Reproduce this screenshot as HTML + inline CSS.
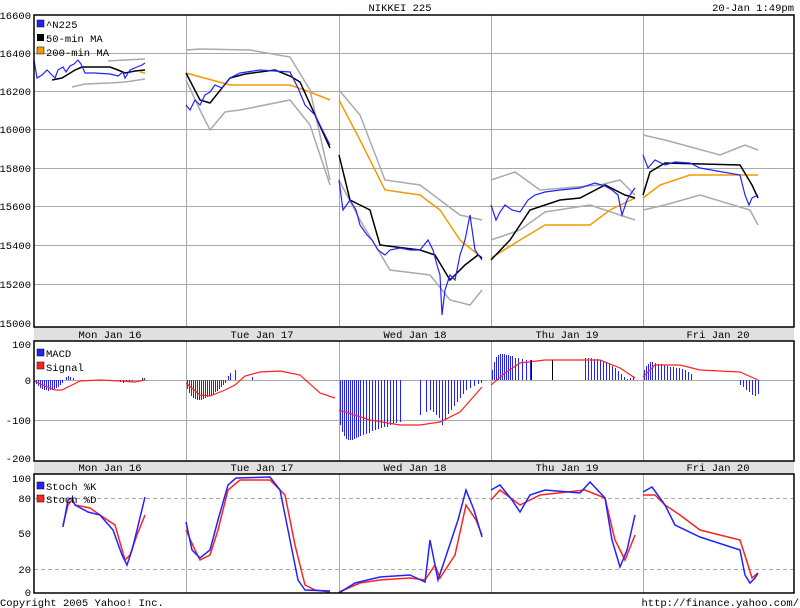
<!DOCTYPE html>
<html><head><meta charset="utf-8"><style>
html,body{margin:0;padding:0;background:#fff;}
svg{display:block;font-family:"Liberation Mono","DejaVu Sans Mono",monospace;font-size:10.5px;}
</style></head><body>
<svg width="800" height="608" viewBox="0 0 800 608" xmlns="http://www.w3.org/2000/svg">
<rect width="800" height="608" fill="#fff"/>
<text x="400" y="11" text-anchor="middle">NIKKEI 225</text>
<text x="794" y="11" text-anchor="end">20-Jan 1:49pm</text>
<g stroke="#aaa" stroke-width="1" fill="none">
<path d="M34 53.5H794M34 91.5H794M34 129.5H794M34 168.5H794M34 206.5H794M34 245.5H794M34 284.5H794"/>
<path d="M186.5 15V327M339.5 15V327M491.5 15V327M643.5 15V327"/>
<path d="M34 380.5H794M34 420.5H794M186.5 341V461M339.5 341V461M491.5 341V461M643.5 341V461"/>
<path d="M186.5 474V593M339.5 474V593M491.5 474V593M643.5 474V593"/>
</g>
<g stroke="#aaa" stroke-dasharray="4,3" fill="none"><path d="M34 498.5H794M34 569.5H794"/></g>
<rect x="34" y="327" width="760" height="14" fill="#e0e0e0"/>
<rect x="34" y="461" width="760" height="13" fill="#e0e0e0"/>
<g text-anchor="middle">
<text x="110" y="338">Mon Jan 16</text><text x="262" y="338">Tue Jan 17</text><text x="415" y="338">Wed Jan 18</text><text x="567" y="338">Thu Jan 19</text><text x="718" y="338">Fri Jan 20</text>
<text x="110" y="471">Mon Jan 16</text><text x="262" y="471">Tue Jan 17</text><text x="415" y="471">Wed Jan 18</text><text x="567" y="471">Thu Jan 19</text><text x="718" y="471">Fri Jan 20</text>
</g>
<g fill="none" stroke-width="1.5">
<path stroke="#aaa" d="M72 87L85 84L110 83L125 82L145 79M108 61L125 60L145 59M186 50L200 49L250 50L290 57L310 90L330 180M186 80L200 110L210 130L225 112L240 110L290 100L310 125L330 185M339 90L360 115L385 180L420 185L440 200L460 215L482 220M339 180L360 220L390 270L430 275L450 300L470 305L482 290M491 180L515 172L540 190L600 185L620 180L635 195M491 240L520 230L545 212L590 205L635 220M643 135L665 140L720 155L745 145L758 150M643 210L665 205L700 195L750 210L758 225"/>
<path stroke="#f29a00" d="M186 73L230 85L290 85L310 92L330 100M339 100L360 140L385 190L420 195L440 210L460 240L482 258M491 258L520 240L545 225L590 225L610 210L635 198M643 198L660 185L690 175L758 175M140 72L145 73"/>
<path stroke="#000" d="M52 80L62 78L75 70L82 67L110 67L118 70L125 73L135 71L145 70M186 73L200 100L210 103L230 78L245 74L275 70L290 76L300 82L330 148M339 155L350 200L370 210L380 245L420 250L435 255L450 280L465 265L478 255L482 258M491 260L510 240L530 210L560 200L580 198L605 185L625 195L635 198M643 195L650 172L665 163L740 165L752 185L758 198"/>
<path stroke="#22f" stroke-width="1.2" d="M34 60L37 78L42 75L47 70L50 73L55 78L58 70L63 67L66 72L70 66L74 64L78 60L81 64L85 73L95 73L110 74L118 76L123 72L125 78L130 70L137 67L142 65L145 63M186 105L190 110L195 100L200 105L205 95L210 92L215 85L222 88L230 78L240 73L260 70L290 72L298 88L305 105L315 115L320 125L330 145M339 180L343 210L350 200L356 210L360 225L367 235L372 240L378 250L385 255L390 250L400 248L410 250L420 250L428 240L433 250L437 265L440 275L442 315L445 290L450 275L455 280L460 255L465 240L470 215L475 250L482 260M491 205L496 220L500 212L505 205L512 210L520 212L528 200L535 195L545 192L560 190L580 188L595 183L605 186L612 190L618 195L622 215L627 200L632 192L635 188M643 155L648 168L655 160L665 165L675 162L690 163L700 168L740 175L745 195L749 205L752 198L758 195"/>
</g>
<rect x="37" y="20" width="7" height="7" fill="#22f" stroke="#000" stroke-width=".5"/><text x="46" y="28">^N225</text>
<rect x="37" y="34" width="7" height="7" fill="#000"/><text x="46" y="42">50-min MA</text>
<rect x="37" y="47" width="7" height="7" fill="#f29a00" stroke="#000" stroke-width=".5"/><text x="46" y="56">200-min MA</text>
<g stroke="#22f" stroke-width="1" transform="translate(0.5,0)">
<path d="M36 380V384M38 380V386M40 380V388M42 380V389M44 380V390M46 380V390M48 380V391M50 380V390M52 380V390M54 380V389M56 380V388M58 380V387M60 380V385M62 380V383M66 380V377M68 380V376M70 380V377M73 380V378M120 380V382M123 380V383M126 380V382M129 380V382M132 380V381M142 380V378M144 380V378"/>
<path d="M187 380V389M189 380V393M191 380V396M193 380V398M195 380V399M197 380V400M199 380V400M201 380V400M203 380V399M205 380V398M207 380V397M209 380V396M211 380V395M213 380V394M215 380V392M217 380V391M219 380V389M221 380V387M223 380V385M225 380V383M228 380V376M230 380V373M235 380V370M252 380V377"/>
<path d="M340 380V425M342 380V432M344 380V436M346 380V439M348 380V440M350 380V440M352 380V440M354 380V439M356 380V438M358 380V437M360 380V436M363 380V435M366 380V434M369 380V433M372 380V431M375 380V430M378 380V429M381 380V428M384 380V427M387 380V427M390 380V425M393 380V424M396 380V423M400 380V422M420 380V415M426 380V412M430 380V410M433 380V412M436 380V415M439 380V418M442 380V425M445 380V420M448 380V414M451 380V410M454 380V406M457 380V402M460 380V398M463 380V394M466 380V390M470 380V388M474 380V386M478 380V384M481 380V383"/>
<path d="M492 380V370M494 380V362M496 380V357M498 380V355M500 380V354M502 380V354M504 380V354M506 380V355M508 380V355M510 380V356M512 380V356M515 380V358M518 380V358M522 380V359M526 380V360M530 380V360M585 380V358M588 380V358M591 380V358M594 380V359M597 380V359M600 380V360M603 380V361M606 380V362M609 380V364M612 380V366M615 380V368M618 380V371M621 380V374M624 380V377M627 380V379M630 380V378M633 380V376"/>
<path d="M644 380V370M646 380V366M648 380V364M650 380V362M652 380V362M655 380V363M658 380V364M661 380V364M664 380V365M667 380V366M670 380V367M673 380V367M676 380V368M679 380V368M682 380V369M685 380V370M688 380V372M691 380V374M740 380V385M743 380V387M746 380V390M749 380V392M752 380V395M755 380V396M758 380V394"/>
</g>
<g fill="none" stroke="#f22" stroke-width="1.2">
<path d="M34 381L45 386L55 390L62 390L70 386L80 381L100 380L120 381L135 382L145 380M186 383L200 395L210 396L225 390L235 385L245 376L260 372L280 371L300 375L320 393L335 398M339 410L370 420L400 425L420 425L440 422L460 412L475 395L482 387M491 385L505 373L520 363L545 360L600 360L620 368L635 378M643 377L655 365L680 365L700 370L740 372L758 380"/>
<path stroke="#000" stroke-width="1" d="M552.5 360V380M531.5 360V380"/>
</g>
<rect x="37" y="349" width="7" height="7" fill="#22f" stroke="#000" stroke-width=".5"/><text x="46" y="357">MACD</text>
<rect x="37" y="362" width="7" height="7" fill="#f22" stroke="#000" stroke-width=".5"/><text x="46" y="371">Signal</text>
<g fill="none" stroke-width="1.5">
<path stroke="#f22" d="M63 525L68 505L72 500L75 505L90 508L100 515L115 525L125 560L130 555L137 535L145 515M186 530L195 550L200 560L210 555L218 530L228 490L240 480L270 480L285 495L295 545L305 585L315 590L330 592M339 592L360 583L380 580L410 578L425 580L435 565L440 578L455 555L466 505L476 520L482 535M491 500L500 490L520 505L540 495L585 490L605 498L615 540L625 560L635 535M643 495L655 495L665 505L680 515L700 530L740 540L748 565L752 578L758 573"/>
<path stroke="#22f" d="M63 527L68 500L72 498L75 505L88 512L100 515L113 530L122 555L127 565L132 550L137 530L145 497M186 522L192 550L200 558L210 550L218 520L228 485L236 478L270 477L280 490L290 540L298 580L305 590L330 591M339 593L355 583L380 577L410 575L425 582L430 540L438 580L448 550L458 520L466 490L474 510L482 537M491 490L500 485L512 500L520 512L530 495L545 490L580 493L590 482L605 498L612 540L620 567L627 550L635 515M643 492L652 487L665 505L675 525L700 537L740 550L745 575L750 583L755 578L758 573"/>
</g>
<rect x="37" y="482" width="7" height="7" fill="#22f" stroke="#000" stroke-width=".5"/><text x="46" y="490">Stoch %K</text>
<rect x="37" y="495" width="7" height="7" fill="#f22" stroke="#000" stroke-width=".5"/><text x="46" y="503">Stoch %D</text>
<g fill="none" stroke="#000" stroke-width="1.5">
<rect x="34" y="15" width="760" height="312"/>
<rect x="34" y="341" width="760" height="120"/>
<rect x="34" y="474" width="760" height="119"/>
</g>
<g text-anchor="end">
<text x="31" y="19">16600</text><text x="31" y="57">16400</text><text x="31" y="95">16200</text><text x="31" y="133">16000</text><text x="31" y="172">15800</text><text x="31" y="210">15600</text><text x="31" y="249">15400</text><text x="31" y="288">15200</text><text x="31" y="327">15000</text>
<text x="31" y="348">100</text><text x="31" y="384">0</text><text x="31" y="424">-100</text><text x="31" y="462">-200</text>
<text x="31" y="482">100</text><text x="31" y="502">80</text><text x="31" y="537">50</text><text x="31" y="573">20</text><text x="31" y="596">0</text>
</g>
<text x="0" y="606">Copyright 2005 Yahoo! Inc.</text>
<text x="799" y="606" text-anchor="end">http://finance.yahoo.com/</text>
</svg>
</body></html>
